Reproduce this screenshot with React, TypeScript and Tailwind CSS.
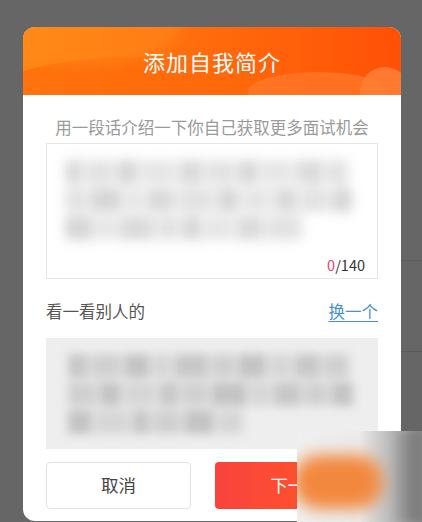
import React from "react";

const lines1 = [
  [18, 28, 20, 36, 24, 30, 18, 34, 26, 22],
  [22, 32, 18, 28, 38, 20, 30, 24, 28, 20],
  [28, 20, 34, 24, 18, 30, 26, 36],
];
const lines2 = [
  [20, 30, 26, 18, 34, 24, 28, 22, 26, 26],
  [28, 22, 32, 20, 26, 36, 20, 28, 24, 22],
  [24, 34, 18, 28, 30, 26],
];

function Blur({ lines, color, gap }: { lines: number[][]; color: string[]; gap: number }) {
  return (
    <div className="flex flex-col" style={{ gap }}>
      {lines.map((segs, i) => (
        <div key={i} className="flex h-[24px] gap-[3px]">
          {segs.map((w, j) => (
            <div key={j} style={{ width: w, background: color[(i + j) % color.length] }} className="h-full" />
          ))}
        </div>
      ))}
    </div>
  );
}

export default function App() {
  return (
    <div
      className="relative w-[422px] h-[522px] overflow-hidden bg-[#666666]"
      style={{ fontFamily: '"Noto Sans CJK SC", "Noto Sans", sans-serif' }}
    >
      {/* background page lines */}
      <div className="absolute right-0 top-[260px] h-px w-[21px] bg-[#5a5a5a]" />
      <div className="absolute right-0 top-[351px] h-px w-[21px] bg-[#5a5a5a]" />

      <div className="pt-[27px] pl-[23px]">
        <div className="w-[378px] h-[494px] rounded-[12px] bg-white overflow-hidden flex flex-col">
          {/* header */}
          <div className="relative h-[68px] overflow-hidden bg-gradient-to-r from-[#ff8714] via-[#ff6a0c] to-[#ff5006] flex items-center justify-center">
            <div className="absolute left-[-60px] top-[30px] w-[340px] h-[120px] rounded-[50%] bg-[#ff6a0a] opacity-70" />
            <div className="absolute left-[-40px] top-[-50px] w-[200px] h-[90px] rounded-[50%] bg-[#ff9020] opacity-40 blur-[6px]" />
            <div className="absolute left-[225px] top-[45px] w-[140px] h-[40px] rounded-[50%] bg-[#ff7a2c] opacity-70" />
            <div className="absolute left-[337px] top-[40px] w-[50px] h-[50px] rounded-full bg-[#ff7d35] opacity-90" />
            <span className="relative text-white text-[22px] leading-none tracking-[1px]">添加自我简介</span>
          </div>

          {/* body */}
          <div className="flex flex-col px-[23px]">
            <div className="mt-[20px] h-[24px] text-center text-[16.5px] leading-[24px] text-[#9a9a9a] whitespace-nowrap">
              用一段话介绍一下你自己获取更多面试机会
            </div>

            <div className="relative mt-[4px] h-[136px] border border-[#e6e6e6] bg-white">
              <div className="absolute left-[18px] top-[16px] blur-[6px]">
                <Blur lines={lines1} color={["#dadada", "#e2e2e2", "#d6d6d6", "#e6e6e6"]} gap={4} />
              </div>
              <div className="absolute right-[12px] bottom-[3px] text-[14.5px] leading-[20px] text-[#333]">
                <span className="text-[#e0456a]">0</span>/140
              </div>
            </div>

            <div className="mt-[20px] h-[24px] flex items-center justify-between">
              <span className="text-[16.5px] text-[#555]">看一看别人的</span>
              <span className="text-[16.5px] text-[#4a8fd6] underline underline-offset-[3px]">换一个</span>
            </div>

            <div className="relative mt-[15px] h-[111px] bg-[#eeeeee] overflow-hidden">
              <div className="absolute left-[22px] top-[16px] blur-[5px]">
                <Blur lines={lines2} color={["#c8c8c8", "#d0d0d0", "#c4c4c4", "#d6d6d6"]} gap={4} />
              </div>
            </div>

            <div className="mt-[13px] flex items-center gap-[24px]">
              <div className="w-[145px] h-[47px] rounded-[4px] border border-[#e2e2e2] bg-white flex items-center justify-center text-[17.5px] text-[#444]">
                取消
              </div>
              <div className="w-[163px] h-[47px] rounded-[4px] bg-gradient-to-r from-[#f9433d] to-[#ff5a1a] flex items-center justify-center text-[17.5px] text-white">
                下一步
              </div>
            </div>
          </div>
        </div>
      </div>

      {/* watermark overlay */}
      <div className="absolute left-[297px] top-[431px] w-[125px] h-[91px] bg-gradient-to-r from-[#f0f0f0] via-[#ebebeb] to-[#8a8a8a] overflow-hidden">
        <div className="absolute left-[-4px] top-[24px] w-[90px] h-[54px] rounded-[26px] bg-[#f2883e] blur-[8px]" />
        <div className="absolute right-0 top-0 w-[30px] h-full bg-gradient-to-r from-transparent to-[#777] blur-[4px]" />
      </div>
    </div>
  );
}
